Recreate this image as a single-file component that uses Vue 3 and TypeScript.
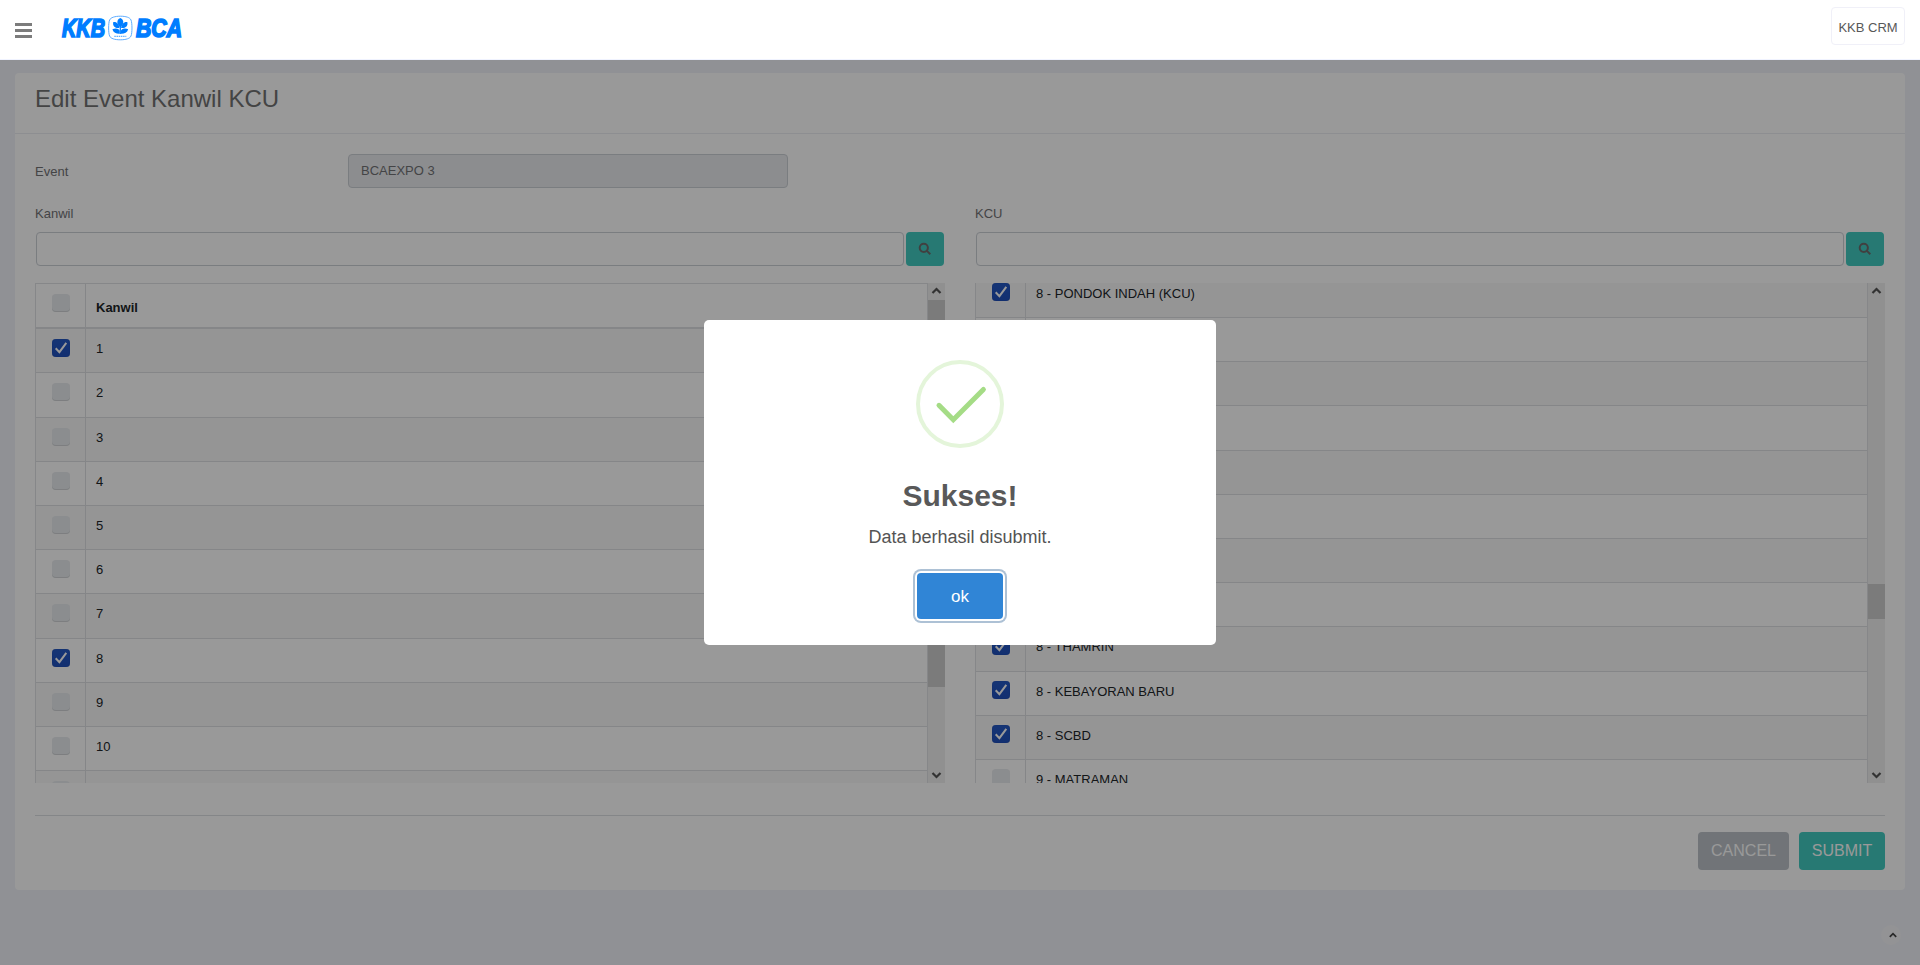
<script setup lang="ts">
interface Row {
  label: string
  checked: boolean
}

const kanwil: Row[] = Array.from({ length: 11 }, (_, i) => ({
  label: i < 10 ? String(i + 1) : '',
  checked: i === 0 || i === 7,
}))

const kcu: Row[] = [
  { label: '8 - PONDOK INDAH (KCU)', checked: true },
  { label: '', checked: false },
  { label: '', checked: false },
  { label: '', checked: false },
  { label: '', checked: false },
  { label: '', checked: false },
  { label: '', checked: false },
  { label: '', checked: false },
  { label: '8 - THAMRIN', checked: true },
  { label: '8 - KEBAYORAN BARU', checked: true },
  { label: '8 - SCBD', checked: true },
  { label: '9 - MATRAMAN', checked: false },
]
</script>

<template>
  <div class="page">
    <header class="topbar">
      <div class="burger"><i></i><i></i><i></i></div>
      <svg class="logo" width="134" height="36" viewBox="-2 -4 134 36">
        <g fill="#007dff" stroke="#007dff" stroke-width="1.700" font-family="Liberation Sans, Arial, sans-serif" font-weight="700" font-style="italic" font-size="25">
          <text x="3" y="22.500" textLength="43" lengthAdjust="spacingAndGlyphs">KKB</text>
          <text x="77" y="22.500" textLength="46" lengthAdjust="spacingAndGlyphs">BCA</text>
        </g>
        <path d="M61.300 2.200C67 2.200 71 3.500 72 6C73.300 9 73.300 19 72 22C71 24.500 67 25.800 61.300 25.800S51.600 24.500 50.600 22C49.300 19 49.300 9 50.600 6C51.600 3.500 56 2.200 61.300 2.200Z" fill="#fff" stroke="#4da3ff" stroke-width="0.900" />
        <g fill="#007dff">
          <path d="M61.300 4C65.500 6 65 10 61.300 13.500C57.600 10 57.100 6 61.300 4Z" />
          <path d="M60.500 14C56 14.500 53.300 12 54.300 8C57.800 7.500 60 10 60.500 14ZM62.100 14C66.600 14.500 69.300 12 68.300 8C64.800 7.500 62.600 10 62.100 14Z" />
          <path d="M60.700 19.800V17C60.500 14.500 56.500 13.800 53.400 15.200C54.500 18.800 57.500 20 60.700 19.800ZM61.900 19.800V17C62.100 14.500 66.100 13.800 69.200 15.200C68.100 18.800 65.100 20 61.900 19.800Z" />
          <path d="M60.700 12H61.900V20H60.700Z" />
        </g>
        <path d="M55.300 22.300H67.300" stroke="#66b1ff" stroke-width="1.300" stroke-dasharray="1.500 0.700" />
      </svg>
      <div class="user">KKB CRM</div>
    </header>

    <main class="card">
      <h1>Edit Event Kanwil KCU</h1>
      <div class="body">
        <div class="event">
          <label>Event</label>
          <div class="field disabled">BCAEXPO 3</div>
        </div>
        <div class="cols">
          <section class="col">
            <label>Kanwil</label>
            <div class="search">
              <div class="field"></div>
              <button><svg width="14" height="14" viewBox="0 0 14 14"><circle cx="5.800" cy="5.800" r="4.100" /><path d="M8.900 8.900L12.300 12.300" /></svg></button>
            </div>
            <div class="scroller">
              <div class="grid">
                <div class="row head">
                  <div class="pick"><span class="box"></span></div>
                  <div class="name">Kanwil</div>
                </div>
                <div v-for="(r, i) in kanwil" :key="i" class="row" :class="{ odd: i % 2 === 0 }">
                  <div class="pick">
                    <span class="box" :class="{ on: r.checked }"><svg v-if="r.checked" viewBox="0 0 18 18"><path d="M3.700 9.200L7.400 13.100L14.300 3.800" /></svg></span>
                  </div>
                  <div class="name">{{ r.label }}</div>
                </div>
              </div>
              <div class="bar">
                <svg viewBox="0 0 17 17"><path d="M4.500 10L8.500 6L12.500 10" /></svg>
                <div class="track"><div class="thumb long"></div></div>
                <svg viewBox="0 0 17 17"><path d="M4.500 7L8.500 11L12.500 7" /></svg>
              </div>
            </div>
          </section>
          <section class="col">
            <label>KCU</label>
            <div class="search">
              <div class="field"></div>
              <button><svg width="14" height="14" viewBox="0 0 14 14"><circle cx="5.800" cy="5.800" r="4.100" /><path d="M8.900 8.900L12.300 12.300" /></svg></button>
            </div>
            <div class="scroller">
              <div class="grid scrolled">
                <div v-for="(r, i) in kcu" :key="i" class="row" :class="{ odd: i % 2 === 0 }">
                  <div class="pick">
                    <span class="box" :class="{ on: r.checked }"><svg v-if="r.checked" viewBox="0 0 18 18"><path d="M3.700 9.200L7.400 13.100L14.300 3.800" /></svg></span>
                  </div>
                  <div class="name">{{ r.label }}</div>
                </div>
              </div>
              <div class="bar">
                <svg viewBox="0 0 17 17"><path d="M4.500 10L8.500 6L12.500 10" /></svg>
                <div class="track"><div class="thumb short"></div></div>
                <svg viewBox="0 0 17 17"><path d="M4.500 7L8.500 11L12.500 7" /></svg>
              </div>
            </div>
          </section>
        </div>
        <div class="actions">
          <button class="cancel">CANCEL</button>
          <button class="submit">SUBMIT</button>
        </div>
      </div>
    </main>

    <div class="totop"><svg width="8" height="6" viewBox="0 0 8 6"><path d="M0.800 4.800L4 1.600L7.200 4.800" /></svg></div>

    <div class="overlay">
      <div class="modal">
        <svg class="tick" width="88" height="88" viewBox="0 0 88 88">
          <circle cx="44" cy="44" r="42" />
          <path d="M23 45.300L37.300 59.800L67.400 29.500" />
        </svg>
        <h2>Sukses!</h2>
        <p>Data berhasil disubmit.</p>
        <button>ok</button>
      </div>
    </div>
  </div>
</template>

<style>
body {
  margin: 0;
  overflow: hidden;
}
</style>

<style scoped>
* {
  box-sizing: border-box;
}
.page {
  position: relative;
  width: 1920px;
  height: 965px;
  overflow: hidden;
  background: #f0f2f8;
  font: 13px/20px "Liberation Sans", Arial, sans-serif;
  color: #727275;
}
button {
  font-family: inherit;
  border: 0;
  padding: 0;
}
.topbar {
  height: 60px;
  background: #fff;
  border-bottom: 1px solid #f0f3ff;
  display: flex;
  align-items: flex-start;
}
.burger {
  margin: 22.500px 0 0 15px;
  width: 17px;
  display: flex;
  flex-direction: column;
  gap: 3px;
}
.burger i {
  height: 3px;
  background: #7c7c7c;
}
.logo {
  margin: 10px 0 0 25px;
}
.user {
  margin: 7px 15px 0 auto;
  width: 74px;
  height: 38px;
  border: 1px solid #f0f0f8;
  border-radius: 4px;
  text-align: center;
  line-height: 39px;
  color: #585858;
  white-space: nowrap;
}
.card {
  margin: 13px 15px 0;
  height: 817px;
  background: #fff;
  border-radius: 4px;
}
h1 {
  margin: 0;
  height: 61px;
  padding: 11px 20px 0;
  font-size: 24px;
  line-height: 29px;
  font-weight: 400;
  color: #727272;
  border-bottom: 1px solid #ebedf2;
}
.body {
  padding: 20px 20px 0;
}
.event {
  display: flex;
}
.event label {
  width: 313px;
  padding-top: 8px;
}
.field {
  height: 34px;
  border: 1px solid #ccd0d6;
  border-radius: 4px;
}
.disabled {
  width: 440px;
  background: #e9ecef;
  padding: 0 12px;
  line-height: 31px;
}
.cols {
  display: flex;
  gap: 30px;
  margin-top: 15px;
}
.col {
  width: 910px;
}
.col > label {
  display: block;
  height: 29px;
  padding-top: 1px;
}
.search {
  display: flex;
  gap: 2px;
  padding: 0 1px;
}
.search .field {
  flex: 1;
}
.search button {
  width: 38px;
  height: 34px;
  border-radius: 4px;
  background: #41cac0;
  display: flex;
  align-items: center;
  justify-content: center;
}
.search svg {
  fill: none;
  stroke: #6c6c6c;
  stroke-width: 2;
}
.scroller {
  margin-top: 17px;
  height: 500px;
  overflow: hidden;
  display: flex;
}
.grid {
  flex: 1;
  border: 1px solid #dfe1e4;
  border-width: 1px 1px 0;
  height: max-content;
}
.scrolled {
  border-top: 0;
  margin-top: -9.200px;
}
.row {
  display: flex;
  height: 44.200px;
  border-bottom: 1px solid #dee0e3;
  color: #212529;
}
.row.odd {
  background: #f9f9f9;
}
.head {
  height: 45.300px;
  border-bottom-width: 2px;
  font-weight: 700;
}
.pick {
  width: 50px;
  border-right: 1px solid #dee0e3;
  padding: 10px 0 0 16px;
}
.scrolled .pick {
  padding-top: 9.500px;
}
.name {
  padding: 10px 0 0 10px;
}
.head .name {
  padding-top: 14px;
}
.box {
  display: block;
  width: 18px;
  height: 18px;
  border-radius: 4px;
  background: #e8ebee;
  box-shadow: inset 0 -1px 0 #d0d3d6;
}
.box.on {
  background: linear-gradient(#2459c4, #1f4fbb);
  box-shadow: inset 0 0 1px #1d429c;
}
.box svg {
  display: block;
  fill: none;
  stroke: #fff;
  stroke-width: 2;
}
.bar {
  width: 17px;
  background: #f0f0f0;
  display: flex;
  flex-direction: column;
}
.bar svg {
  height: 17px;
  fill: none;
  stroke: #555;
  stroke-width: 2.200;
}
.track {
  flex: 1;
}
.thumb {
  background: #cdcdcd;
}
.long {
  height: 387px;
}
.short {
  height: 35px;
  margin-top: 284px;
}
.actions {
  margin-top: 32px;
  border-top: 1px solid #dddfe3;
  padding-top: 16px;
  display: flex;
  justify-content: flex-end;
  gap: 10px;
}
.actions button {
  height: 38px;
  border-radius: 4px;
  color: #fff;
  font-size: 16px;
  line-height: 38px;
}
.cancel {
  width: 91px;
  background: #bcc2c8;
}
.submit {
  width: 86px;
  background: #41cac0;
}
.totop {
  position: absolute;
  left: 1881px;
  top: 925px;
  width: 20px;
  height: 20px;
  border-radius: 50%;
  background: #f5f5f8;
  display: flex;
  align-items: center;
  justify-content: center;
  padding-left: 4px;
}
.totop svg {
  fill: none;
  stroke: #444;
  stroke-width: 1.700;
}
.overlay {
  position: absolute;
  left: 0;
  right: 0;
  top: 60px;
  bottom: 0;
  background: rgba(0, 0, 0, 0.4);
  display: flex;
  justify-content: center;
  align-items: flex-start;
}
.modal {
  margin-top: 260px;
  width: 512px;
  height: 325px;
  background: #fff;
  border-radius: 5px;
  display: flex;
  flex-direction: column;
  align-items: center;
  color: #545454;
}
.tick {
  margin-top: 40px;
  fill: none;
}
.tick circle {
  stroke: #e4f5da;
  stroke-width: 4;
}
.tick path {
  stroke: #a5dc86;
  stroke-width: 5;
  stroke-linecap: round;
}
h2 {
  margin: 30px 0 0;
  font-size: 30px;
  line-height: 36px;
  color: #595959;
}
p {
  margin: 13px 0 0;
  font-size: 18px;
  line-height: 20px;
}
.modal button {
  margin-top: 26px;
  width: 86px;
  height: 46px;
  border-radius: 4px;
  background: #3085d6;
  color: #fff;
  font-size: 17px;
  padding-top: 2px;
  box-shadow: 0 0 0 2px #fff, 0 0 0 4px #adc1d5;
}
</style>
